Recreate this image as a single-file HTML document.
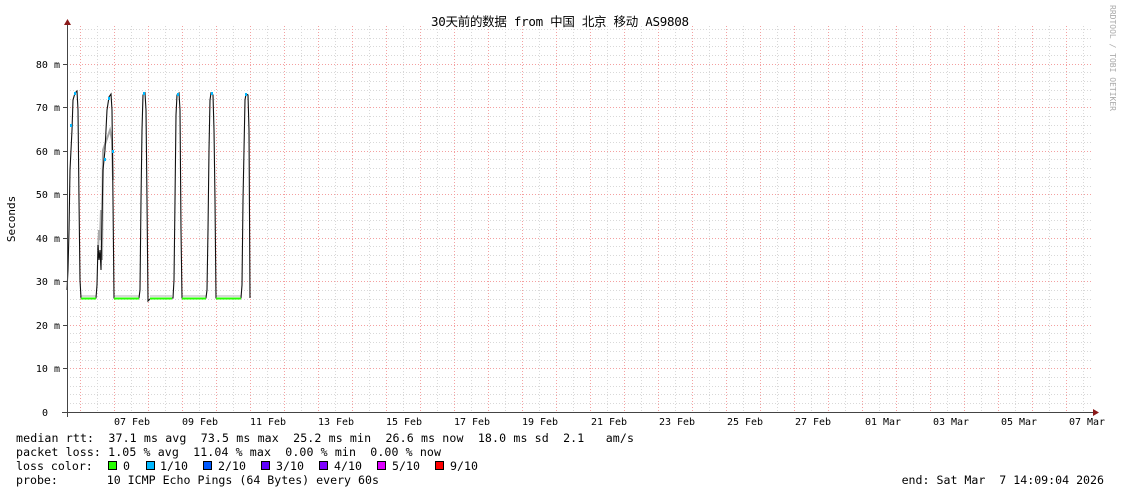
<!DOCTYPE html>
<html><head><meta charset="utf-8"><style>
html,body{margin:0;padding:0;background:#fff;}
svg{display:block}
text{font-family:"DejaVu Sans Mono","Liberation Mono",monospace;font-size:11.6px;fill:#000}
</style></head><body>
<svg width="1121" height="494" xmlns="http://www.w3.org/2000/svg">
<rect width="1121" height="494" fill="#fff"/>
<g stroke="#d8d8d8" stroke-dasharray="1,2" stroke-width="1">
<path d="M67 403.5H1093M67 394.5H1093M67 386.5H1093M67 377.5H1093M67 360.5H1093M67 351.5H1093M67 342.5H1093M67 333.5H1093M67 316.5H1093M67 307.5H1093M67 299.5H1093M67 290.5H1093M67 273.5H1093M67 264.5H1093M67 255.5H1093M67 246.5H1093M67 229.5H1093M67 220.5H1093M67 212.5H1093M67 203.5H1093M67 186.5H1093M67 177.5H1093M67 168.5H1093M67 159.5H1093M67 142.5H1093M67 133.5H1093M67 125.5H1093M67 116.5H1093M67 99.5H1093M67 90.5H1093M67 81.5H1093M67 72.5H1093M67 55.5H1093M67 46.5H1093M67 38.5H1093M67 29.5H1093"/>
<path d="M97.5 26V412M131.5 26V412M165.5 26V412M199.5 26V412M233.5 26V412M267.5 26V412M301.5 26V412M335.5 26V412M369.5 26V412M403.5 26V412M437.5 26V412M471.5 26V412M505.5 26V412M539.5 26V412M573.5 26V412M607.5 26V412M641.5 26V412M675.5 26V412M709.5 26V412M743.5 26V412M777.5 26V412M811.5 26V412M845.5 26V412M879.5 26V412M913.5 26V412M947.5 26V412M981.5 26V412M1015.5 26V412M1049.5 26V412M1083.5 26V412"/>
</g>
<g stroke="#f4a0a0" stroke-dasharray="1,2" stroke-width="1">
<path d="M67 368.5H1093M67 325.5H1093M67 281.5H1093M67 238.5H1093M67 194.5H1093M67 151.5H1093M67 107.5H1093M67 64.5H1093"/>
<path d="M80.5 26V412M114.5 26V412M148.5 26V412M182.5 26V412M216.5 26V412M250.5 26V412M284.5 26V412M318.5 26V412M352.5 26V412M386.5 26V412M420.5 26V412M454.5 26V412M488.5 26V412M522.5 26V412M556.5 26V412M590.5 26V412M624.5 26V412M658.5 26V412M692.5 26V412M726.5 26V412M760.5 26V412M794.5 26V412M828.5 26V412M862.5 26V412M896.5 26V412M930.5 26V412M964.5 26V412M998.5 26V412M1032.5 26V412M1066.5 26V412"/>
</g>
<polyline fill="none" stroke="#aaa" stroke-width="2" points="98,250 99,230 100,240 101,210 102,260 103,150 110,130 112,140 113,180"/>
<path d="M81 296H96M114 296H139M150 296H172M182 296H206M216 296H241" stroke="#ccc" stroke-width="1.5"/>
<polyline fill="none" stroke="#111" stroke-width="1.1" points="67,290 68,270 69,230 70,170 72,130 73,100 75,93 77,91 78,110 79,200 80,280 81,298 96,298 97,285 98,245 99,260 100,250 101,270 102,220 103,170 105,150 107,110 109,97 111,94 112,110 113,200 114,298 139,298 140,290 141,200 142,130 143,95 145,93 146,110 147,200 148,301 150,299 173,298 174,280 175,200 176,115 177,95 179,93 180,110 181,230 182,298 206,298 207,290 208,230 209,150 210,100 211,93 213,95 214,130 215,200 216,298 241,298 242,285 243,200 244,150 245,100 246,94 248,95 249,130 250,298"/>
<g stroke="#26ff00" stroke-width="2" fill="none">
<path d="M81 298.5H96M114 298.5H139M150 298.5H172M182 298.5H206M216 298.5H241"/>
</g>
<g fill="#00b8ff">
<rect x="74" y="92" width="2" height="3"/><rect x="70" y="124" width="2" height="3"/><rect x="108" y="97" width="2" height="3"/><rect x="104" y="158" width="2" height="3"/><rect x="143" y="92" width="2" height="3"/><rect x="177" y="93" width="2" height="3"/><rect x="211" y="92" width="2" height="3"/><rect x="245" y="93" width="2" height="3"/><rect x="112" y="150" width="2" height="3"/>
</g>
<path d="M67.5 20V417M62 412.5H1096" stroke="#444" stroke-width="1"/>
<path d="M64 25L67.5 19L71 25Z M1093 409L1099 412.5L1093 416Z" fill="#8b1a1a"/>
<path d="M63 64.5H67M63 107.5H67M63 151.5H67M63 194.5H67M63 238.5H67M63 281.5H67M63 325.5H67M63 368.5H67" stroke="#444"/>
<g text-anchor="end">
<text x="60" y="68" style="font-size:10px">80 m</text>
<text x="60" y="111" style="font-size:10px">70 m</text>
<text x="60" y="155" style="font-size:10px">60 m</text>
<text x="60" y="198" style="font-size:10px">50 m</text>
<text x="60" y="242" style="font-size:10px">40 m</text>
<text x="60" y="285" style="font-size:10px">30 m</text>
<text x="60" y="329" style="font-size:10px">20 m</text>
<text x="60" y="372" style="font-size:10px">10 m</text>
<text x="48" y="416" style="font-size:10px">0</text>
</g>
<g text-anchor="middle">
<text x="132" y="425" style="font-size:10px">07 Feb</text>
<text x="200" y="425" style="font-size:10px">09 Feb</text>
<text x="268" y="425" style="font-size:10px">11 Feb</text>
<text x="336" y="425" style="font-size:10px">13 Feb</text>
<text x="404" y="425" style="font-size:10px">15 Feb</text>
<text x="472" y="425" style="font-size:10px">17 Feb</text>
<text x="540" y="425" style="font-size:10px">19 Feb</text>
<text x="609" y="425" style="font-size:10px">21 Feb</text>
<text x="677" y="425" style="font-size:10px">23 Feb</text>
<text x="745" y="425" style="font-size:10px">25 Feb</text>
<text x="813" y="425" style="font-size:10px">27 Feb</text>
<text x="883" y="425" style="font-size:10px">01 Mar</text>
<text x="951" y="425" style="font-size:10px">03 Mar</text>
<text x="1019" y="425" style="font-size:10px">05 Mar</text>
<text x="1087" y="425" style="font-size:10px">07 Mar</text>
</g>
<text x="560" y="26" text-anchor="middle" textLength="258" style="font-size:12.5px;font-family:'DejaVu Sans Mono','Noto Sans CJK SC',monospace">30天前的数据 from 中国 北京 移动 AS9808</text>
<text transform="translate(15,219) rotate(-90)" text-anchor="middle" style="font-size:11px">Seconds</text>
<text transform="translate(1110,5) rotate(90)" style="font-size:8px;fill:#aaa">RRDTOOL / TOBI OETIKER</text>
<text x="16" y="442" textLength="618" xml:space="preserve">median rtt:  37.1 ms avg  73.5 ms max  25.2 ms min  26.6 ms now  18.0 ms sd  2.1   am/s</text>
<text x="16" y="456" textLength="425" xml:space="preserve">packet loss: 1.05 % avg  11.04 % max  0.00 % min  0.00 % now</text>
<text x="16" y="470" xml:space="preserve">loss color:</text>
<text x="16" y="484" xml:space="preserve">probe:       10 ICMP Echo Pings (64 Bytes) every 60s</text>
<text x="1104" y="484" text-anchor="end" xml:space="preserve">end: Sat Mar  7 14:09:04 2026</text>
<g stroke="#000" stroke-width="1">
<rect x="108.5" y="461.5" width="8" height="8" fill="#26ff00"/>
<rect x="146.5" y="461.5" width="8" height="8" fill="#00b8ff"/>
<rect x="203.5" y="461.5" width="8" height="8" fill="#0059ff"/>
<rect x="261.5" y="461.5" width="8" height="8" fill="#5e00ff"/>
<rect x="319.5" y="461.5" width="8" height="8" fill="#7e00ff"/>
<rect x="377.5" y="461.5" width="8" height="8" fill="#dd00ff"/>
<rect x="435.5" y="461.5" width="8" height="8" fill="#ff0000"/>
</g>
<text x="123" y="470">0</text>
<text x="160" y="470">1/10</text>
<text x="218" y="470">2/10</text>
<text x="276" y="470">3/10</text>
<text x="334" y="470">4/10</text>
<text x="392" y="470">5/10</text>
<text x="450" y="470">9/10</text>
</svg>
</body></html>
